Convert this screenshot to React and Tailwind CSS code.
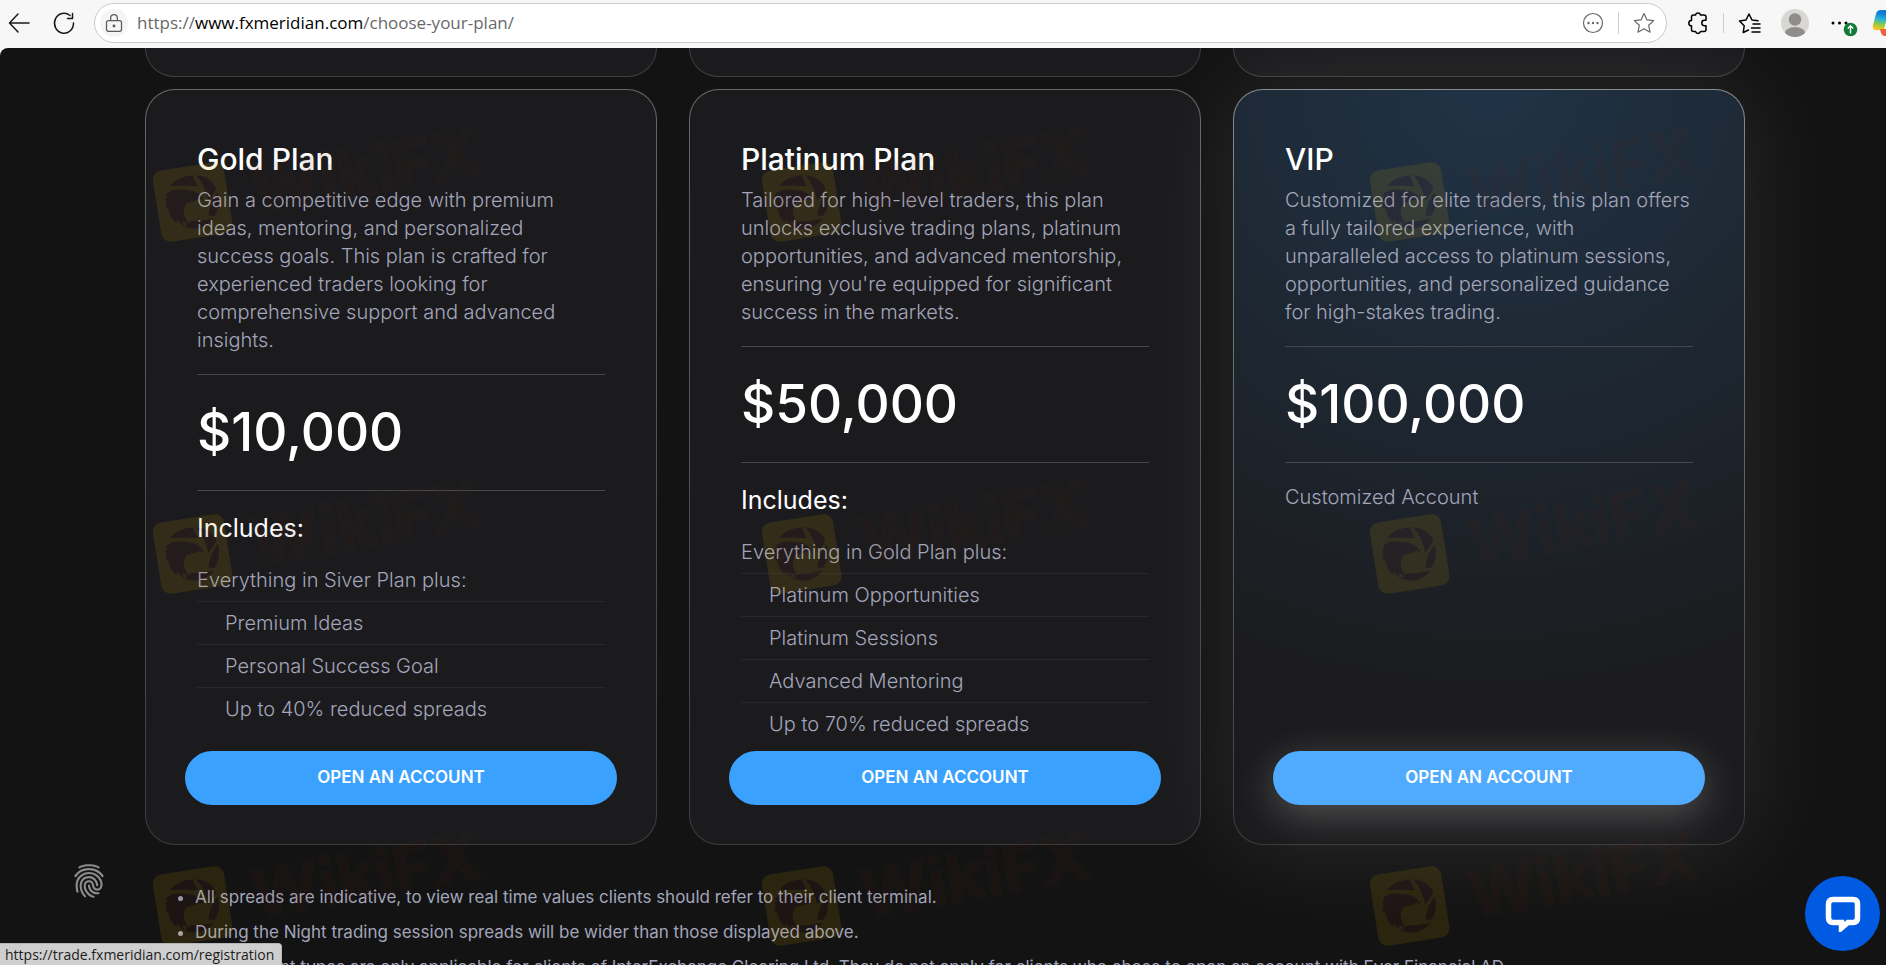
import React from 'react';
import { IoFingerPrint } from 'react-icons/io5';

const plans = [
  {
    name: 'Gold Plan',
    description: 'Gain a competitive edge with premium ideas, mentoring, and personalized success goals. This plan is crafted for experienced traders looking for comprehensive support and advanced insights.',
    price: '$10,000',
    intro: 'Everything in Siver Plan plus:',
    features: ['Premium Ideas', 'Personal Success Goal', 'Up to 40% reduced spreads'],
  },
  {
    name: 'Platinum Plan',
    description: "Tailored for high-level traders, this plan unlocks exclusive trading plans, platinum opportunities, and advanced mentorship, ensuring you're equipped for significant success in the markets.",
    price: '$50,000',
    intro: 'Everything in Gold Plan plus:',
    features: ['Platinum Opportunities', 'Platinum Sessions', 'Advanced Mentoring', 'Up to 70% reduced spreads'],
  },
  {
    name: 'VIP',
    description: 'Customized for elite traders, this plan offers a fully tailored experience, with unparalleled access to platinum sessions, opportunities, and personalized guidance for high-stakes trading.',
    price: '$100,000',
    note: 'Customized Account',
    vip: true,
  },
];

const notes = [
  'All spreads are indicative, to view real time values clients should refer to their client terminal.',
  'During the Night trading session spreads will be wider than those displayed above.',
  'The account types are only applicable for clients of InterExchange Clearing Ltd. They do not apply for clients who chose to open an account with Ever Financial AD',
];

const marks = [
  'left-[147px] top-[80px]',
  'left-[756px] top-[80px]',
  'left-[1364px] top-[80px]',
  'left-[147px] top-[432px]',
  'left-[756px] top-[432px]',
  'left-[1364px] top-[432px]',
  'left-[147px] top-[784px]',
  'left-[756px] top-[784px]',
  'left-[1364px] top-[784px]',
];

const Icon = ({ className, children }) => (
  <svg viewBox="0 0 24 24" fill="none" stroke="currentColor" strokeWidth="1.5" strokeLinecap="round" strokeLinejoin="round" className={className}>
    {children}
  </svg>
);

const Toolbar = () => (
  <header className="flex h-12 shrink-0 items-start overflow-hidden bg-[#f7f7f7] pt-[3px]">
    <div className="flex h-10 shrink-0 items-center gap-[21px] pl-[7px]">
      <button aria-label="Back" className="text-[#1a1a1a]">
        <Icon className="size-6"><path d="M22 12H2.500M11 3L2.500 12L11 21" /></Icon>
      </button>
      <button aria-label="Refresh" className="text-[#1a1a1a]">
        <Icon className="size-6"><path d="M21.500 12A9.500 10 0 1 1 18 4.500M20.500 2.500V7.500H15.500" /></Icon>
      </button>
    </div>
    <div className="ml-[18px] flex h-10 min-w-0 flex-1 items-center rounded-full border border-[#cbcbcb] bg-white pl-[5px]">
      <span className="flex size-7 items-center justify-center rounded-full bg-[#f5f5f5] text-[#5c5c5c]">
        <Icon className="size-5">
          <rect x="3" y="9" width="18" height="13" rx="2.500" />
          <path d="M8 9V6a4 4 0 0 1 8 0v3" />
          <circle cx="12" cy="15.500" r="1" fill="currentColor" />
        </Icon>
      </span>
      <div className="ml-[9px] flex-1 truncate font-['Open_Sans','Noto_Sans',sans-serif] text-[17px] text-[#686868]">
        https://<span className="text-black">www.fxmeridian.com</span>/choose-your-plan/
      </div>
      <button aria-label="More options" className="text-[#686868]">
        <Icon className="size-6">
          <circle cx="12" cy="12" r="9.500" strokeWidth="1.200" />
          <g fill="currentColor" stroke="none"><circle cx="7.500" cy="12" r="1.200" /><circle cx="12" cy="12" r="1.200" /><circle cx="16.500" cy="12" r="1.200" /></g>
        </Icon>
      </button>
      <span className="mx-[13px] h-[22px] w-px bg-[#cfcfcf]" />
      <button aria-label="Favorite" className="mr-[10px] text-[#686868]">
        <Icon className="size-6"><path strokeWidth="1.200" d="M12 2.500L14.900 8.800L21.700 9.600L16.700 14.300L18 21.200L12 17.800L6 21.200L7.300 14.300L2.300 9.600L9.100 8.800Z" /></Icon>
      </button>
    </div>
    <div className="ml-[19px] flex h-10 shrink-0 items-center">
      <button aria-label="Extensions" className="text-black">
        <Icon className="size-6">
          <path d="M8 4H9.500A2.600 2.600 0 0 1 14.500 4H18A2 2 0 0 1 20 6V9.300H18.500A2.700 2.700 0 0 0 18.500 14.700H20V18.500A2 2 0 0 1 18 20.500H14.500A2.600 2.600 0 0 1 9.500 20.500H7.500A2 2 0 0 1 5.500 18.500V14.800A2.600 2.600 0 0 1 5.500 9.500V6A2 2 0 0 1 7.500 4Z" />
        </Icon>
      </button>
      <span className="ml-[13px] mr-[14px] h-5 w-px bg-[#cfcfcf]" />
      <button aria-label="Favorites list" className="text-black">
        <Icon className="size-6"><path d="M10.500 19L5.200 21.500L6.200 14.800L1.500 10L8 9L11 3L14 9L20 9.800M15 13H22M13.500 17H22M14 21H22" /></Icon>
      </button>
      <button aria-label="Profile" className="ml-[19px] size-7 overflow-hidden rounded-full">
        <svg viewBox="0 0 28 28" className="size-7">
          <rect width="28" height="28" fill="#d8d7d4" />
          <circle cx="14" cy="10.500" r="6.200" fill="#8f8d8b" />
          <ellipse cx="14" cy="25" rx="10.500" ry="7" fill="#8f8d8b" />
        </svg>
      </button>
      <button aria-label="Settings, update available" className="ml-[22px]">
        <svg viewBox="0 0 28 28" className="size-7">
          <circle cx="2" cy="14" r="1.500" /><circle cx="8.500" cy="14" r="1.500" /><circle cx="15" cy="14" r="1.500" />
          <circle cx="19.500" cy="20.500" r="6.800" fill="#117a37" />
          <path d="M19.500 24.500V17M16.800 19.500L19.500 16.800L22.200 19.500" stroke="#fff" strokeWidth="1.400" fill="none" />
        </svg>
      </button>
      <button aria-label="Copilot" className="ml-[13px] w-[14px] overflow-hidden">
        <svg viewBox="0 0 28 28" className="h-7 w-7">
          <defs>
            <linearGradient id="copilot" x1="0.200" y1="0" x2="0" y2="1">
              <stop offset="0.100" stopColor="#1179d6" />
              <stop offset="0.400" stopColor="#25b6d8" />
              <stop offset="0.650" stopColor="#8fc94a" />
              <stop offset="0.900" stopColor="#f5c518" />
            </linearGradient>
          </defs>
          <path d="M9 1H20L13 19Q12 21 9 21H4Q0 21 1 16L4 5Q5 1 9 1Z" fill="url(#copilot)" />
          <path d="M8 20H14L20 14V27H12Q9 26 8 20Z" fill="#f0603a" />
          <path d="M15 9H20V20H12Z" fill="#f7f7f7" />
        </svg>
      </button>
    </div>
  </header>
);

const PlanCard = ({ name, description, price, intro, features, note, vip }) => (
  <article
    className={
      vip
        ? 'flex flex-col rounded-[30px] border border-transparent px-[51px] pb-[39px] pt-[51px] shadow-[0_0_100px_rgba(255,255,255,0.1)] [background:radial-gradient(ellipse_130%_82%_at_50%_0%,#203346,#1b1b1d)_padding-box,linear-gradient(#858b91,#3c3c3e)_border-box]'
        : 'flex flex-col rounded-[30px] border border-transparent px-[51px] pb-[39px] pt-[51px] [background:linear-gradient(#1b1b1d,#1b1b1d)_padding-box,linear-gradient(#686868,#3c3c3e)_border-box]'
    }
  >
    <h2 className="text-[30px] font-medium leading-9 text-white">{name}</h2>
    <p className="mt-[9px] text-xl font-light leading-7 text-[#a3a5ba]">{description}</p>
    <p className="mt-5 border-y border-[#48484a] py-5 text-[53px] font-medium leading-[75px] text-white">{price}</p>
    {note ? (
      <p className="mt-5 text-xl font-light leading-7 text-[#a3a5ba]">{note}</p>
    ) : (
      <>
        <h3 className="mb-[14px] mt-5 text-[25px] leading-[34px] text-white">Includes:</h3>
        <ul className="divide-y divide-[#27282b] text-xl font-light leading-7 text-[#a3a5ba]">
          <li className="py-[7px]">{intro}</li>
          {features.map((f) => (
            <li key={f} className="py-[7px] pl-7">{f}</li>
          ))}
        </ul>
      </>
    )}
    <div className="-mx-3 mt-auto pt-[6px]">
      <a
        href="https://trade.fxmeridian.com/registration"
        className={
          vip
            ? 'flex h-[54px] items-center justify-center rounded-full bg-[#50abff] text-[17px] font-semibold text-white shadow-[0_10px_40px_rgba(255,255,255,0.25)]'
            : 'flex h-[54px] items-center justify-center rounded-full bg-[#3ba1ff] text-[17px] font-semibold text-white'
        }
      >
        OPEN AN ACCOUNT
      </a>
    </div>
  </article>
);

const Eagle = () => (
  <>
    <path d="M70 174Q92 146 136 142L152 174Q110 172 70 174Z" />
    <path d="M148 142Q194 146 208 184L184 218Q176 176 148 142Z" />
    <path d="M212 192Q224 232 202 264L184 262Q188 226 212 192Z" />
    <path d="M200 272Q164 314 112 296L130 280Q164 280 200 272Z" />
    <path d="M62 194L76 186Q110 182 140 190Q164 198 170 220L160 212Q140 222 120 224Q106 240 112 262Q118 282 128 290L104 278L112 296L86 272L92 288Q66 266 66 246L54 234L60 220L53 214L62 206L57 203Z" />
  </>
);

const Watermark = ({ className }) => (
  <svg viewBox="0 0 1020 390" className={`absolute h-[130px] w-[340px] ${className}`}>
    <mask id="eagle">
      <rect width="1020" height="390" fill="#fff" />
      <g fill="#000"><Eagle /></g>
    </mask>
    <g mask="url(#eagle)">
      <rect x="29" y="114" width="216" height="216" rx="28" fill="#d0a000" opacity="0.13" transform="rotate(-9 137 222)" />
    </g>
    <g fill="#6a2418" opacity="0.12"><Eagle /></g>
    <text x="325" y="260" fontSize="200" fontWeight="700" fill="#5a1c10" stroke="#5a3a28" strokeWidth="3" opacity="0.09" transform="rotate(-10 325 260)">WikiFX</text>
  </svg>
);

export default () => (
  <div className="flex h-screen flex-col overflow-hidden bg-[#f7f7f7] font-['Inter',sans-serif]">
    <Toolbar />
    <main className="relative min-h-0 flex-1 overflow-hidden rounded-tl-lg bg-[#131313]">
      <div className="mx-auto w-full max-w-[1604px] pl-1">
        <div className="grid grid-cols-3 gap-8">
          {plans.map(({ name }) => (
            <div key={name} className="h-[29px] rounded-b-[30px] border border-t-0 border-[#404042] bg-[#1b1b1d]" />
          ))}
        </div>
        <section className="mt-3 grid grid-cols-3 gap-8">
          {plans.map((plan) => (
            <PlanCard key={plan.name} {...plan} />
          ))}
        </section>
        <ul className="mt-[35px] list-disc pl-[50px] text-[17px] leading-[35px] text-[#a3a5ba]">
          {notes.map((n) => (
            <li key={n}>{n}</li>
          ))}
        </ul>
      </div>
      <div aria-hidden="true" className="pointer-events-none absolute inset-0 overflow-hidden">
        {marks.map((m) => (
          <Watermark key={m} className={m} />
        ))}
      </div>
      <button aria-label="Privacy settings" className="absolute bottom-[66px] left-[71px] text-[#8c8c8c]">
        <IoFingerPrint className="size-9" />
      </button>
      <button aria-label="Open chat" className="absolute bottom-[14px] right-[6px] flex size-[75px] items-center justify-center rounded-full bg-[#005be2]">
        <svg viewBox="0 0 36 36" className="size-9">
          <path d="M8 3.500H28Q32.500 3.500 32.500 8V22Q32.500 26.500 28 26.500H23L16.500 32V26.500H8Q3.500 26.500 3.500 22V8Q3.500 3.500 8 3.500Z" fill="none" stroke="#fff" strokeWidth="5.500" />
        </svg>
      </button>
      <div className="absolute bottom-0 left-0 h-[22px] rounded-tr border-r border-t border-[#b5b5b5] bg-[#cfcfcf] pl-[5px] pr-[7px] font-['Open_Sans','Noto_Sans',sans-serif] text-sm leading-[22px] text-[#1c1c1c]">
        https://trade.fxmeridian.com/registration
      </div>
    </main>
  </div>
);
